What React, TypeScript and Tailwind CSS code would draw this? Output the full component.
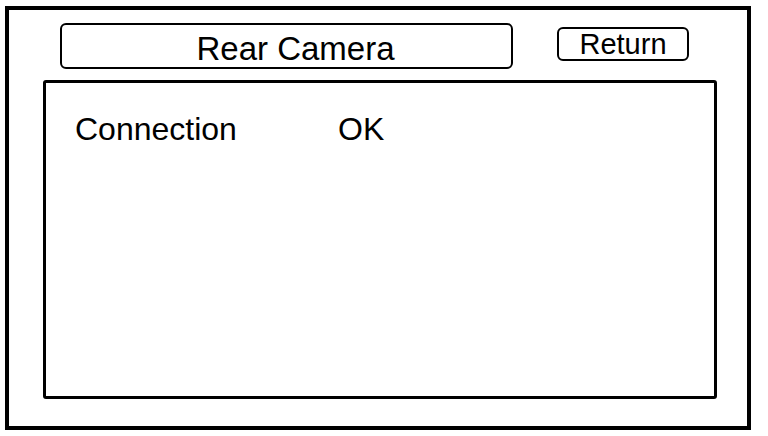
export default function App() {
  return (
    <div
      className="w-[768px] h-[436px] bg-white overflow-hidden"
      style={{ fontFamily: '"Liberation Sans", Arial, sans-serif' }}
    >
      <div className="ml-[5px] mt-[6px] w-[746px] h-[424px] border-4 border-black flex flex-col text-black">
        <div className="flex items-start pt-[13px] pl-[51px]">
          <div className="w-[453px] h-[46px] border-2 border-black rounded-[6px] flex justify-center pl-[18px] pt-[8px]">
            <span className="text-[33px] leading-[32px]">Rear Camera</span>
          </div>
          <div className="ml-[44px] mt-[4px] w-[132px] h-[34px] border-2 border-black rounded-[6px] flex justify-center pt-[1px]">
            <span className="text-[29px] leading-[28px]">Return</span>
          </div>
        </div>
        <div className="ml-[34px] mt-[11px] w-[674px] h-[319px] border-[3px] border-black rounded-[3px] pt-[30px] pl-[29px]">
          <div className="flex text-[32px] leading-[32px]">
            <span className="w-[263px]">Connection</span>
            <span>OK</span>
          </div>
        </div>
      </div>
    </div>
  );
}
